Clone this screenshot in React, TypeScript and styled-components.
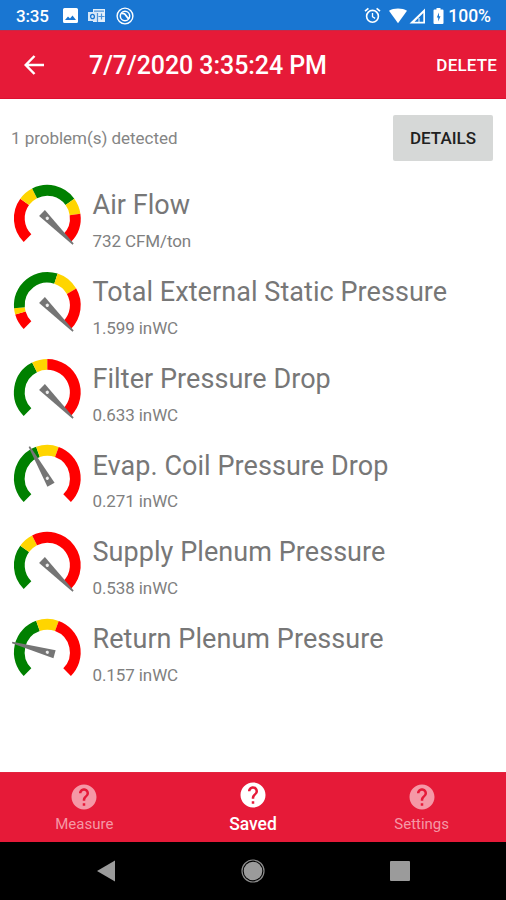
import React from "react";
import styled, { createGlobalStyle } from "styled-components";

const GlobalStyle = createGlobalStyle`
  * { box-sizing: border-box; }
  body { margin: 0; background: #fff; font-family: Roboto, "Liberation Sans", sans-serif; }
  svg { display: block; flex: none; }
`;

const Screen = styled.div`
  width: 506px;
  height: 900px;
  display: flex;
  flex-direction: column;
  overflow: hidden;
  background: #fff;
`;

const StatusBar = styled.div`
  height: 30px;
  flex: none;
  display: flex;
  align-items: center;
  padding: 1px 15px 0 16px;
  background: #1976d2;
  color: #fff;
`;

const Clock = styled.span`
  width: 47px;
  font-size: 17px;
  font-weight: 500;
  line-height: 28px;
  letter-spacing: -0.2px;
`;

const Notifications = styled.div`
  display: flex;
  align-items: center;
  gap: 10px;
`;

const SystemIcons = styled.div`
  margin-left: auto;
  display: flex;
  align-items: center;
`;

const Battery = styled.span`
  margin-left: 2px;
  font-size: 17.5px;
  font-weight: 500;
  line-height: 28px;
  letter-spacing: 0;
`;

const AppBar = styled.header`
  height: 69px;
  flex: none;
  display: flex;
  align-items: center;
  padding: 0 9px 0 24px;
  background: #e61a38;
  color: #fff;
  border-top: 1px solid #c62847;
  border-bottom: 1px solid #dd1030;
`;

const Title = styled.h1`
  margin: 3px 0 0 45px;
  font-size: 25px;
  font-weight: 500;
  line-height: 32px;
  letter-spacing: -0.07px;
  white-space: nowrap;
`;

const DeleteButton = styled.button`
  margin-left: auto;
  padding: 0;
  border: 0;
  background: none;
  color: #fff;
  font: 500 17px/24px Roboto, sans-serif;
  letter-spacing: 0.2px;
  margin-right: -0.2px;
`;

const Content = styled.main`
  flex: 1;
  min-height: 0;
`;

const Summary = styled.div`
  height: 79px;
  display: flex;
  align-items: center;
  justify-content: space-between;
  padding: 0 13px 1px 11px;
`;

const Problems = styled.span`
  font-size: 17px;
  line-height: 24px;
  font-weight: 400;
  letter-spacing: -0.03px;
  color: #858585;
`;

const DetailsButton = styled.button`
  width: 100px;
  height: 46px;
  padding: 0;
  border: 0;
  border-radius: 2px;
  background: #d6d8d7;
  color: #202020;
  font: 500 17px/24px Roboto, sans-serif;
`;

const Row = styled.div`
  height: 86.75px;
  display: flex;
  padding: 3.2px 0 0 10px;
`;

const Labels = styled.div`
  margin-left: 8.5px;
  display: flex;
  flex-direction: column;
`;

const Name = styled.span`
  margin-top: 6.3px;
  font-size: 27px;
  line-height: 36px;
  font-weight: 400;
  letter-spacing: 0.06px;
  color: #777;
  white-space: nowrap;
`;

const Value = styled.span`
  margin-top: 5.700px;
  font-size: 17px;
  line-height: 24px;
  font-weight: 400;
  letter-spacing: -0.1px;
  color: #808080;
`;

const TabBar = styled.nav`
  height: 70px;
  flex: none;
  display: grid;
  grid-template-columns: repeat(3, 1fr);
  background: #e61a38;
  border-top: 1px solid #e2243e;
`;

const Tab = styled.div<{ $active?: boolean }>`
  display: flex;
  flex-direction: column;
  align-items: center;
  padding-top: ${(p) => (p.$active ? 6.5 : 8.5)}px;
  color: ${(p) => (p.$active ? "#fff" : "#f598a6")};
`;

const TabLabel = styled.span<{ $active?: boolean }>`
  margin-top: ${(p) => (p.$active ? 2 : 0)}px;
  font-size: ${(p) => (p.$active ? 17.5 : 15)}px;
  line-height: 24px;
  font-weight: ${(p) => (p.$active ? 500 : 400)};
`;

const NavBar = styled.div`
  height: 58px;
  flex: none;
  display: flex;
  align-items: center;
  padding-left: 96px;
  gap: 124px;
  background: #000;
`;

const COLORS = { r: "#ff0000", y: "#ffd500", g: "#008000" };
type Band = [keyof typeof COLORS, number];

// Bands are listed with the angle (degrees from 12 o'clock) at which each ends.
const readings: { name: string; value: string; needle: number; bands: Band[] }[] = [
  { name: "Air Flow", value: "732 CFM/ton", needle: 135, bands: [["r", -54], ["y", -27], ["g", 54], ["y", 82], ["r", 135]] },
  { name: "Total External Static Pressure", value: "1.599 inWC", needle: 135, bands: [["r", -106], ["y", -95], ["g", 18], ["y", 60], ["r", 135]] },
  { name: "Filter Pressure Drop", value: "0.633 inWC", needle: 135, bands: [["g", -27], ["y", 0], ["r", 135]] },
  { name: "Evap. Coil Pressure Drop", value: "0.271 inWC", needle: -29.5, bands: [["g", -19.5], ["y", 20], ["r", 135]] },
  { name: "Supply Plenum Pressure", value: "0.538 inWC", needle: 135, bands: [["g", -54], ["y", -27], ["r", 135]] },
  { name: "Return Plenum Pressure", value: "0.157 inWC", needle: -74.5, bands: [["g", -19.5], ["y", 20], ["r", 135]] },
];

const arc = (from: number, to: number) => {
  const point = (deg: number) => {
    const a = (deg * Math.PI) / 180;
    return `${(28 * Math.sin(a)).toFixed(2)} ${(-28 * Math.cos(a)).toFixed(2)}`;
  };
  return `M${point(from)}A28 28 0 ${to - from > 180 ? 1 : 0} 1 ${point(to)}`;
};

function Gauge({ bands, needle }: { bands: Band[]; needle: number }) {
  return (
    <svg width="74" height="74" viewBox="-37.3 -37.3 74 74">
      {bands.map(([color, end], i) => (
        <path
          key={i}
          d={arc(i === 0 ? -135 : bands[i - 1][1], end)}
          fill="none"
          stroke={COLORS[color]}
          strokeWidth="10.8"
        />
      ))}
      <g transform={`rotate(${needle})`}>
        <path d="M-4.1 7.5L-.8 -36.5H.8L4.1 7.5Z" fill="#757575" />
        <circle r="1.6" fill="#eee" />
      </g>
    </svg>
  );
}

const HelpIcon = () => (
  <svg width="30" height="30" viewBox="0 0 24 24" fill="currentColor">
    <path d="M12 2C6.48 2 2 6.48 2 12s4.48 10 10 10 10-4.48 10-10S17.52 2 12 2zm1 17h-2v-2h2v2zm2.07-7.75l-.9.92C13.45 12.9 13 13.5 13 15h-2v-.5c0-1.1.45-2.1 1.17-2.83l1.24-1.26c.37-.36.59-.86.59-1.41 0-1.1-.9-2-2-2s-2 .9-2 2H8c0-2.21 1.79-4 4-4s4 1.79 4 4c0 .88-.36 1.68-.93 2.25z" />
  </svg>
);

export default function App() {
  return (
    <Screen>
      <GlobalStyle />
      <StatusBar>
        <Clock>3:35</Clock>
        <Notifications>
          <svg width="15" height="15" viewBox="0 0 15 15">
            <path fill="#fff" fillRule="evenodd" d="M1.5 0h12A1.5 1.5 0 0 1 15 1.500v12a1.500 1.500 0 0 1-1.500 1.500h-12A1.500 1.500 0 0 1 0 13.500v-12A1.500 1.500 0 0 1 1.500 0zM2 12h11L9.500 7.500 7 10.500 5 8.500z" />
          </svg>
          <svg width="18" height="16" viewBox="0 0 18 16">
            <path fill="#e3effa" d="M5 1h12v13H5z" />
            <path fill="#d5e6f7" d="M0 4h9v9H0z" />
            <path d="M6 3.200h10M9.500 5v9M13.500 5.500v6M10.500 8.500h6" stroke="#4e94da" strokeWidth="1.200" fill="none" />
            <ellipse cx="4.500" cy="8.500" rx="1.900" ry="2.200" fill="none" stroke="#1976d2" strokeWidth="1.300" />
          </svg>
          <svg width="18" height="18" viewBox="0 0 18 18" fill="none" stroke="#fff">
            <circle cx="9" cy="9" r="7.900" strokeWidth="1.400" />
            <circle cx="9" cy="9" r="4.700" strokeWidth="1.500" />
            <path d="M5.300 6.800c2.400-1 4 .4 5 2.200s2 2.400 3 2.200" strokeWidth="1.700" />
          </svg>
        </Notifications>
        <SystemIcons>
          <svg width="17" height="17" viewBox="0 0 17 17" fill="none" stroke="#fff">
            <circle cx="8.500" cy="9.300" r="5.900" strokeWidth="1.600" />
            <path d="M1 4.200L4.400 1.300M16 4.200L12.600 1.300" strokeWidth="1.700" />
            <path d="M8.500 6v3.700l2.600 1.700" strokeWidth="1.300" />
          </svg>
          <svg width="46" height="18" viewBox="0 0 46 18">
            <path fill="#fff" d="M8 3.700C12.500.6 21.500.6 26 3.700L17 16.300z" />
            <path fill="#fff" fillRule="evenodd" d="M44 1.500V16.500H28.500zM42.300 6v8.800H33.500z" />
            <path d="M38 11v4" stroke="#fff" strokeWidth="1" />
          </svg>
          <svg width="19" height="18" viewBox="0 0 19 18">
            <path fill="#fff" fillRule="evenodd" d="M9.500 1h4v1.600h2A1 1 0 0 1 16.500 3.600V16a1 1 0 0 1-1 1h-8a1 1 0 0 1-1-1V3.600a1 1 0 0 1 1-1h2zM12 5.500L9.800 10.500h1.400v4l2.300-5.200h-1.500z" />
          </svg>
          <Battery>100%</Battery>
        </SystemIcons>
      </StatusBar>
      <AppBar>
        <svg width="20" height="20" viewBox="0 0 20 20" fill="none" stroke="#fff" strokeWidth="2.500">
          <path d="M20 10H2M10.500 1L1.700 10l8.800 9" />
        </svg>
        <Title>7/7/2020 3:35:24 PM</Title>
        <DeleteButton>DELETE</DeleteButton>
      </AppBar>
      <Content>
        <Summary>
          <Problems>1 problem(s) detected</Problems>
          <DetailsButton>DETAILS</DetailsButton>
        </Summary>
        {readings.map((r) => (
          <Row key={r.name}>
            <Gauge bands={r.bands} needle={r.needle} />
            <Labels>
              <Name>{r.name}</Name>
              <Value>{r.value}</Value>
            </Labels>
          </Row>
        ))}
      </Content>
      <TabBar>
        {["Measure", "Saved", "Settings"].map((label) => (
          <Tab key={label} $active={label === "Saved"}>
            <HelpIcon />
            <TabLabel $active={label === "Saved"}>{label}</TabLabel>
          </Tab>
        ))}
      </TabBar>
      <NavBar>
        <svg width="20" height="22" viewBox="0 0 20 22">
          <path d="M19 0.500V21.500L1 11z" fill="#9b9b9b" />
        </svg>
        <svg width="26" height="26" viewBox="0 0 26 26">
          <circle cx="13" cy="13" r="11" fill="none" stroke="#8c8c8c" strokeWidth="1.200" />
          <circle cx="13" cy="13" r="9.300" fill="#9b9b9b" />
        </svg>
        <svg width="20" height="20" viewBox="0 0 20 20">
          <rect width="20" height="20" rx="1" fill="#9b9b9b" />
        </svg>
      </NavBar>
    </Screen>
  );
}
